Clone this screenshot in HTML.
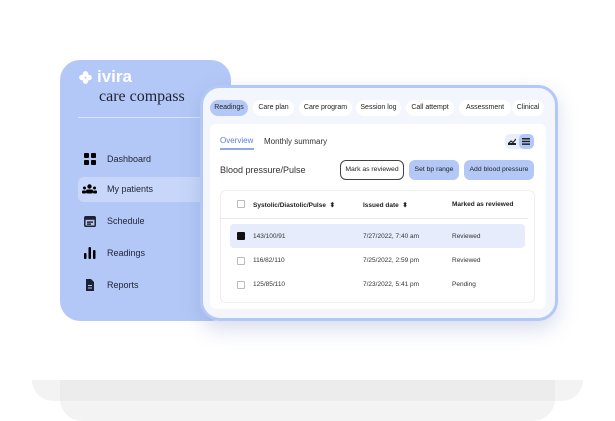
<!DOCTYPE html>
<html><head><meta charset="utf-8"><style>
*{margin:0;padding:0;box-sizing:border-box}
body{width:615px;height:421px;background:#fff;position:relative;overflow:hidden;font-family:"Liberation Sans",sans-serif;color:#222}
.abs{position:absolute}
.b1{left:32px;top:380px;width:551px;height:21px;background:#f3f3f3;border-radius:0 0 22px 22px}
.b2{left:60px;top:380px;width:495px;height:41px;background:#f3f3f3;border-radius:0 0 22px 22px}
.b3{left:60px;top:380px;width:495px;height:21px;background:#ececec}
.side{left:60px;top:60px;width:171px;height:261px;background:#b4c8f7;border-radius:20px}
.nav{position:absolute;left:24px;font-size:9px;color:#1d2233;display:flex;align-items:center}
.ic{width:23px;display:flex;align-items:center}
.main{left:200px;top:85px;width:358px;height:236px;background:#f4f6fd;border:3px solid #b4c8f7;border-radius:20px;box-shadow:0 8px 20px rgba(100,120,180,.25)}
.tab{position:absolute;top:12px;height:16px;border-radius:8px;background:#fff;font-size:7px;line-height:16px;text-align:center;color:#222}
.panel{left:210px;top:124px;width:336px;height:185px;background:#fff;border-radius:6px}
.btn{position:absolute;top:160px;height:20px;border-radius:6px;font-size:6.8px;line-height:20px;text-align:center;background:#b4c8f7;color:#222}
.cb{position:absolute;width:8px;height:8px;border:1px solid #bbb;border-radius:1px;background:#fff}
.t{position:absolute;font-size:6.5px;color:#333}
</style></head><body>
<div class="abs b1"></div><div class="abs b2"></div><div class="abs b3"></div>
<div class="abs side">
 <div class="abs" style="left:19px;top:7px;color:#fff;font-size:17px;font-weight:bold;display:flex;align-items:center;gap:5px">
  <svg width="13" height="13" viewBox="0 0 14 14"><circle cx="7" cy="3.2" r="3" fill="#fff"/><circle cx="7" cy="10.8" r="3" fill="#fff"/><circle cx="3.2" cy="7" r="3" fill="#fff"/><circle cx="10.8" cy="7" r="3" fill="#fff"/></svg>ivira</div>
 <div class="abs" style="left:39px;top:28px;font-family:'Liberation Serif',serif;font-size:16px;color:#1d2233">care compass</div>
 <div class="abs" style="left:18px;top:57px;width:153px;height:1px;background:#dbe4fb"></div>
 <div class="abs" style="left:18px;top:117px;width:153px;height:25px;background:#c8d6fa;border-radius:6px 0 0 6px"></div>
 <div class="nav" style="top:93px"><span class="ic"><svg width="12" height="12"><rect x="0" y="0" width="5" height="5" rx="1"/><rect x="7" y="0" width="5" height="5" rx="1"/><rect x="0" y="7" width="5" height="5" rx="1"/><rect x="7" y="7" width="5" height="5" rx="1"/></svg></span>Dashboard</div>
 <div class="nav" style="top:124px;left:22px"><span class="ic" style="width:25px"><svg width="15" height="10"><circle cx="7.5" cy="2.5" r="2.2"/><rect x="4" y="5.5" width="7" height="4" rx="1.5"/><circle cx="2.5" cy="4" r="1.5"/><rect x="0" y="6.5" width="4" height="3" rx="1"/><circle cx="12.5" cy="4" r="1.5"/><rect x="11" y="6.5" width="4" height="3" rx="1"/></svg></span>My patients</div>
 <div class="nav" style="top:155px"><span class="ic"><svg width="12" height="12"><rect x="0.8" y="1.8" width="10.4" height="9.4" rx="1" fill="none" stroke="#1d2233" stroke-width="1.5"/><rect x="0.8" y="1.8" width="10.4" height="3" fill="#1d2233"/><rect x="3" y="6.5" width="6" height="1.2"/><rect x="3" y="8.5" width="4" height="1.2"/></svg></span>Schedule</div>
 <div class="nav" style="top:187px"><span class="ic"><svg width="12" height="12"><rect x="0" y="6" width="2.5" height="6" rx="1"/><rect x="4.5" y="0" width="2.5" height="12" rx="1"/><rect x="9" y="3" width="2.5" height="9" rx="1"/></svg></span>Readings</div>
 <div class="nav" style="top:219px"><span class="ic"><svg width="12" height="12"><path d="M2 0h5l3 3v9H2z" fill="#1d2233"/><rect x="4" y="6" width="4" height="1" fill="#b4c8f7"/><rect x="4" y="8.5" width="4" height="1" fill="#b4c8f7"/></svg></span>Reports</div>
</div>
<div class="abs main">
 <div class="tab" style="left:7px;width:38px;background:#b4c8f7">Readings</div>
 <div class="tab" style="left:50px;width:41px">Care plan</div>
 <div class="tab" style="left:96px;width:53px">Care program</div>
 <div class="tab" style="left:153px;width:45px">Session log</div>
 <div class="tab" style="left:203px;width:48px">Call attempt</div>
 <div class="tab" style="left:256px;width:52px">Assessment</div>
 <div class="tab" style="left:309px;width:32px">Clinical</div>
</div>
<div class="abs panel"></div>
<div class="t" style="left:220px;top:136px;font-size:8px;color:#5b7fdb">Overview</div>
<div class="abs" style="left:220px;top:148px;width:34px;height:1.5px;background:#8ea8ee"></div>
<div class="t" style="left:264px;top:137px;font-size:8px;color:#333">Monthly summary</div>
<div class="abs" style="left:505px;top:134px;width:29px;height:15px;background:#e8eefc;border-radius:5px"></div>
<div class="abs" style="left:519px;top:134px;width:15px;height:15px;background:#b4c8f7;border-radius:5px"></div>
<svg class="abs" style="left:508px;top:138px" width="8" height="7"><path d="M0 6L3 3L5 4.5L8 1" stroke="#222" fill="none" stroke-width="1.2"/><rect x="0" y="5" width="8" height="2" fill="#222"/></svg>
<svg class="abs" style="left:522px;top:138px" width="8" height="7"><rect y="0" width="8" height="1.5" fill="#222"/><rect y="2.7" width="8" height="1.5" fill="#222"/><rect y="5.4" width="8" height="1.5" fill="#222"/></svg>
<div class="t" style="left:220px;top:165px;font-size:9px;color:#333">Blood pressure/Pulse</div>
<div class="btn" style="left:340px;width:64px;background:#fff;border:1px solid #444;line-height:18px">Mark as reviewed</div>
<div class="btn" style="left:409px;width:50px">Set bp range</div>
<div class="btn" style="left:464px;width:70px">Add blood pressure</div>
<div class="abs" style="left:220px;top:190px;width:315px;height:113px;border:1px solid #eee;border-radius:6px"></div>
<div class="abs" style="left:220px;top:218px;width:308px;height:1px;background:#e8e8e8"></div>
<div class="cb" style="left:237px;top:200px"></div>
<div class="t" style="left:253px;top:201px;font-weight:bold;color:#222">Systolic/Diastolic/Pulse &nbsp;⬍</div>
<div class="t" style="left:363px;top:201px;font-weight:bold;color:#222">Issued date &nbsp;⬍</div>
<div class="t" style="left:452px;top:201px;font-weight:bold;color:#222">Marked as reviewed</div>
<div class="abs" style="left:230px;top:224px;width:295px;height:24px;background:#e6ecfc;border-radius:4px"></div>
<div class="cb" style="left:237px;top:232px;background:#111;border-color:#111"></div>
<div class="t" style="left:253px;top:233px">143/100/91</div><div class="t" style="left:363px;top:233px">7/27/2022, 7:40 am</div><div class="t" style="left:452px;top:233px">Reviewed</div>
<div class="cb" style="left:237px;top:257px"></div>
<div class="t" style="left:253px;top:257px">116/82/110</div><div class="t" style="left:363px;top:257px">7/25/2022, 2:59 pm</div><div class="t" style="left:452px;top:257px">Reviewed</div>
<div class="cb" style="left:237px;top:281px"></div>
<div class="t" style="left:253px;top:281px">125/85/110</div><div class="t" style="left:363px;top:281px">7/23/2022, 5:41 pm</div><div class="t" style="left:452px;top:281px">Pending</div>
</body></html>
